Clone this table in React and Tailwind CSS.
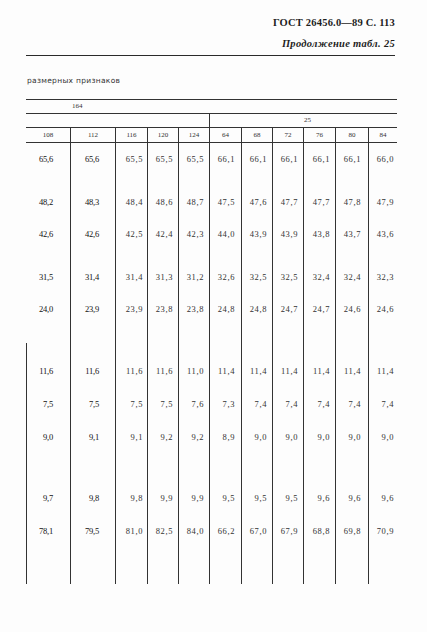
import React from "react";

const colCls = [
  "pr-[17px]",
  "pr-[16px] border-l",
  "pr-[4px] border-l",
  "pr-[5px] border-l",
  "pr-[5px] border-l",
  "pr-[6px] border-l",
  "pr-[5px] border-l",
  "pr-[5px] border-l",
  "pr-[5px] border-l",
  "pr-[7px] border-l",
  "pr-[3px] border-l",
];

const headers = ["108", "112", "116", "120", "124", "64", "68", "72", "76", "80", "84"];

const rows = [
  { h: "h-[51px] pt-[8px]", v: ["65,6", "65,6", "65,5", "65,5", "65,5", "66,1", "66,1", "66,1", "66,1", "66,1", "66,0"] },
  { h: "h-[32px]", v: ["48,2", "48,3", "48,4", "48,6", "48,7", "47,5", "47,6", "47,7", "47,7", "47,8", "47,9"] },
  { h: "h-[43px]", v: ["42,6", "42,6", "42,5", "42,4", "42,3", "44,0", "43,9", "43,9", "43,8", "43,7", "43,6"] },
  { h: "h-[32px]", v: ["31,5", "31,4", "31,4", "31,3", "31,2", "32,6", "32,5", "32,5", "32,4", "32,4", "32,3"] },
  { h: "h-[42px]", v: ["24,0", "23,9", "23,9", "23,8", "23,8", "24,8", "24,8", "24,7", "24,7", "24,6", "24,6"] },
  { h: "h-[20px]", v: ["", "", "", "", "", "", "", "", "", "", ""], left: true },
  { h: "h-[33px]", v: ["11,6", "11,6", "11,6", "11,6", "11,0", "11,4", "11,4", "11,4", "11,4", "11,4", "11,4"], left: true },
  { h: "h-[33px]", v: ["7,5", "7,5", "7,5", "7,5", "7,6", "7,3", "7,4", "7,4", "7,4", "7,4", "7,4"], left: true },
  { h: "h-[61px]", v: ["9,0", "9,1", "9,1", "9,2", "9,2", "8,9", "9,0", "9,0", "9,0", "9,0", "9,0"], left: true },
  { h: "h-[33px]", v: ["9,7", "9,8", "9,8", "9,9", "9,9", "9,5", "9,5", "9,5", "9,6", "9,6", "9,6"], left: true },
  { h: "h-[61px]", v: ["78,1", "79,5", "81,0", "82,5", "84,0", "66,2", "67,0", "67,9", "68,8", "69,8", "70,9"], left: true },
];

const gridCols = "grid grid-cols-[44px_45px_32px_31px_31px_32px_31px_31px_32px_33px_29px]";

export default function App() {
  return (
    <div
      className="w-[427px] h-[632px] bg-[#fdfdfd] text-[#1e1e1e] overflow-hidden"
      style={{ fontFamily: '"Liberation Serif", "DejaVu Serif", serif' }}
    >
      <div className="flex flex-col items-end pr-[32px] pt-[16px]">
        <div className="text-[10.5px] font-bold leading-[14px] tracking-[0.2px]">
          ГОСТ 26456.0—89 С. 113
        </div>
        <div className="mt-[7px] text-[10.5px] font-bold italic leading-[14px] tracking-[0.3px]">
          Продолжение табл. 25
        </div>
      </div>
      <div className="ml-[26px] w-[369px] mt-[4px] border-t-[1.5px] border-[#2a2a2a]"></div>

      <div
        className="ml-[27px] mt-[20px] text-[7.5px] leading-[10px] text-[#333] tracking-[0.3px]"
        style={{ fontFamily: '"DejaVu Sans", sans-serif' }}
      >
        размерных признаков
      </div>

      <div className="ml-[26px] w-[371px] mt-[13px] border-[#333]">
        <div className="border-t border-[#333] h-[14px] flex items-center pl-[46px] text-[7px] leading-none text-[#333]">
          164
        </div>
        <div className="border-t border-[#333] h-[14px] flex">
          <div className="w-[183px]"></div>
          <div className="flex-1 border-l border-[#333] flex items-center justify-center pl-[8px] text-[7px] leading-none text-[#333]">
            25
          </div>
        </div>
        <div className={`${gridCols} border-t border-b border-[#333] h-[16px]`}>
          {headers.map((h, i) => (
            <div
              key={i}
              className={`${i > 0 ? "border-l" : ""} border-[#333] flex items-center justify-center text-[7px] leading-none text-[#333]`}
            >
              {h}
            </div>
          ))}
        </div>
        {rows.map((r, ri) => (
          <div key={ri} className={gridCols}>
            {r.v.map((v, ci) => (
              <div
                key={ci}
                className={`${r.h} ${colCls[ci]} ${ci === 0 && r.left ? "border-l" : ""} border-[#333] flex justify-end items-start text-[8.5px] leading-[16px] ${ci < 2 ? "text-[#111] tracking-[-0.2px]" : "tracking-[0.6px] text-[#333]"}`}
              >
                {v}
              </div>
            ))}
          </div>
        ))}
      </div>
    </div>
  );
}
